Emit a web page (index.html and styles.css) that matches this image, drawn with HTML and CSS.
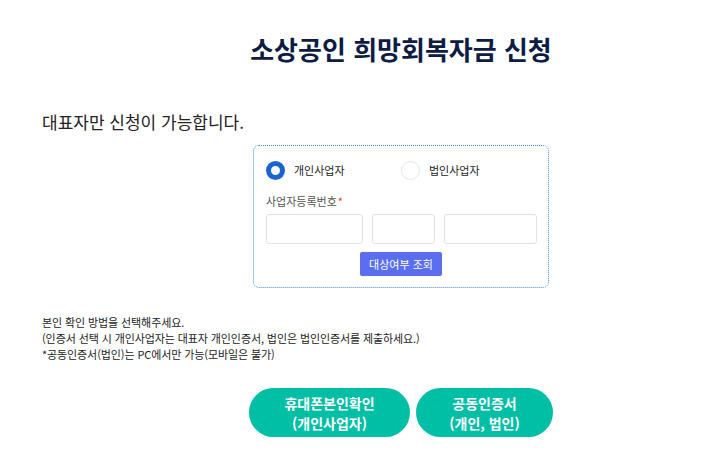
FILE: index.html
```html
<!DOCTYPE html>
<html lang="ko">
<head>
<meta charset="utf-8">
<link rel="stylesheet" href="styles.css">
</head>
<body>
<div class="page">
  <h1 class="title">소상공인 희망회복자금 신청</h1>
  <p class="notice">대표자만 신청이 가능합니다.</p>
  <div class="card">
    <div class="radios">
      <label class="radio"><span class="dot on"></span><span>개인사업자</span></label>
      <label class="radio"><span class="dot"></span><span>법인사업자</span></label>
    </div>
    <div class="field-label">사업자등록번호<span class="req">*</span></div>
    <div class="inputs">
      <input class="inp w1" type="text">
      <input class="inp w2" type="text">
      <input class="inp w3" type="text">
    </div>
    <div class="btn-row"><button class="check">대상여부 조회</button></div>
  </div>
  <div class="guide">
    <p>본인 확인 방법을 선택해주세요.</p>
    <p>(인증서 선택 시 개인사업자는 대표자 개인인증서, 법인은 법인인증서를 제출하세요.)</p>
    <p>*공동인증서(법인)는 PC에서만 가능(모바일은 불가)</p>
  </div>
  <div class="actions">
    <button class="pill phone">휴대폰본인확인<br>(개인사업자)</button>
    <button class="pill cert">공동인증서<br>(개인, 법인)</button>
  </div>
</div>
</body>
</html>
```
FILE: styles.css
```css
* { box-sizing: border-box; }
html, body { margin: 0; padding: 0; background: #fff; }
body { font-family: "Noto Sans CJK KR", "Noto Sans", sans-serif; color: #222; }
.page { width: 802px; padding: 0 0 0 42px; }
.title {
  margin: 0 0 0 -42px; padding-top: 32px; height: 70px;
  font-size: 26px; font-weight: 700; color: #0d1b45;
  text-align: center; line-height: 34px;
}
.notice { margin: 40px 0 0; font-size: 17px; line-height: 24px; color: #222; }
.card {
  margin: 11px 0 0 211px; width: 296px; height: 143px;
  border: 1px dotted #4a8fd6; border-radius: 6px;
  padding: 14px 12px 0 12px;
}
.radios { display: flex; height: 20px; align-items: center; }
.radio { display: flex; align-items: center; font-size: 11px; color: #222; width: 141px; }
.dot {
  width: 19px; height: 19px; border-radius: 50%; border: 1px solid #e6e6e6;
  margin-right: 9px; background: #fff;
}
.dot.on { border: 5px solid #1a64d2; }
.field-label { margin-top: 14px; font-size: 11px; color: #555; line-height: 14px; }
.req { color: #e0443a; margin-left: 1px; }
.inputs { display: flex; gap: 9px; margin-top: 6px; }
.inp { height: 30px; border: 1px solid #e2e2e2; border-radius: 3px; padding: 0; background: #fff; }
.w1 { width: 97px; }
.w2 { width: 63px; }
.w3 { width: 93px; }
.btn-row { display: flex; justify-content: center; margin-top: 8px; }
.check {
  background: #5b6ef0; color: #fff; border: 0; border-radius: 2px;
  font-family: inherit; font-size: 11px; height: 24px; padding: 0 9px;
}
.guide { margin-top: 26px; font-size: 11px; line-height: 16px; color: #222; letter-spacing: -0.1px; }
.guide p { margin: 0; }
.actions { display: flex; justify-content: center; gap: 6px; margin-top: 26px; margin-left: -42px; }
.pill {
  background: #00bfa5; color: #fff; border: 0; border-radius: 25px;
  font-family: inherit; font-weight: 700; font-size: 14px; line-height: 20px;
  height: 49px; padding: 0;
}
.phone { width: 161px; }
.cert { width: 137px; }
```
